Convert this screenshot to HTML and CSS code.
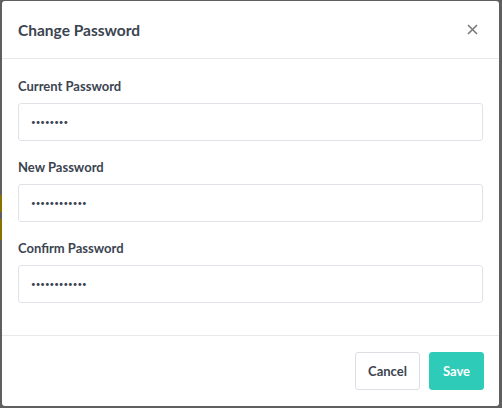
FILE: index.html
```html
<!DOCTYPE html>
<html lang="en">
<head>
<meta charset="utf-8">
<title>Change Password</title>
<link rel="stylesheet" href="styles.css">
</head>
<body>
<div class="modal">
  <header class="modal-head">
    <h2 class="modal-title">Change Password</h2>
    <button class="close" aria-label="Close">
      <svg width="11" height="11" viewBox="0 0 11 11"><path d="M1 1L10 10M10 1L1 10" stroke="#7a7a7a" stroke-width="1.6" fill="none"/></svg>
    </button>
  </header>
  <section class="modal-body">
    <div class="field">
      <label class="label">Current Password</label>
      <input class="input" type="password" value="abcdefgh">
    </div>
    <div class="field">
      <label class="label">New Password</label>
      <input class="input" type="password" value="abcdefghijkl">
    </div>
    <div class="field">
      <label class="label">Confirm Password</label>
      <input class="input" type="password" value="abcdefghijkl">
    </div>
  </section>
  <footer class="modal-foot">
    <button class="btn btn-cancel">Cancel</button>
    <button class="btn btn-save">Save</button>
  </footer>
</div>
</body>
</html>
```

FILE: styles.css
```css
* { box-sizing: border-box; }
html, body { height: 100%; }
body {
  margin: 0;
  padding: 1px 3px 2px 2px;
  background: linear-gradient(to bottom, #5f5f5f 0, #5f5f5f 195px, #8a7000 195px, #8a7000 212px, #5f5f5f 212px, #5f5f5f 219px, #8a7000 219px, #8a7000 240px, #5f5f5f 240px) no-repeat 0 0 / 2px 100%, #5f5f5f;
  font-family: Lato, "Noto Sans", sans-serif;
  color: #3b4450;
}
.modal {
  height: 100%;
  background: #fff;
  border-radius: 3px;
  display: flex;
  flex-direction: column;
}
.modal-head {
  display: flex;
  align-items: center;
  justify-content: space-between;
  padding: 16px;
  border-bottom: 1px solid #e6e8eb;
  height: 58px;
}
.modal-title {
  margin: 0;
  font-size: 15.5px;
  font-weight: 700;
  color: #3b4450;
  line-height: 24px;
}
.close {
  border: 0;
  background: none;
  padding: 0;
  width: 11px;
  height: 11px;
  margin-right: 5px;
  display: flex;
}
.modal-body {
  padding: 17px 16px 16px;
  flex: 1;
}
.field { margin-bottom: 16px; }
.label {
  display: block;
  font-size: 13px;
  font-weight: 700;
  line-height: 20px;
  margin-bottom: 7px;
  color: #3b4450;
}
.input {
  display: block;
  width: 100%;
  height: 38px;
  border: 1px solid #dfe3e8;
  border-radius: 3px;
  padding: 0 12px;
  font-family: Lato, sans-serif;
  font-size: 8px;
  color: #3b4450;
  background: #fff;
}
.modal-foot {
  display: flex;
  justify-content: flex-end;
  gap: 9px;
  padding: 16px 15px 16px 16px;
  border-top: 1px solid #e6e8eb;
}
.btn {
  height: 38px;
  border-radius: 3px;
  font-family: Lato, sans-serif;
  font-size: 13px;
  font-weight: 700;
  cursor: pointer;
}
.btn-cancel {
  width: 65px;
  background: #fff;
  border: 1px solid #dcdfe3;
  color: #3b4450;
}
.btn-save {
  width: 55px;
  background: #2dcbb8;
  border: 1px solid #2dcbb8;
  color: #fff;
}
```
